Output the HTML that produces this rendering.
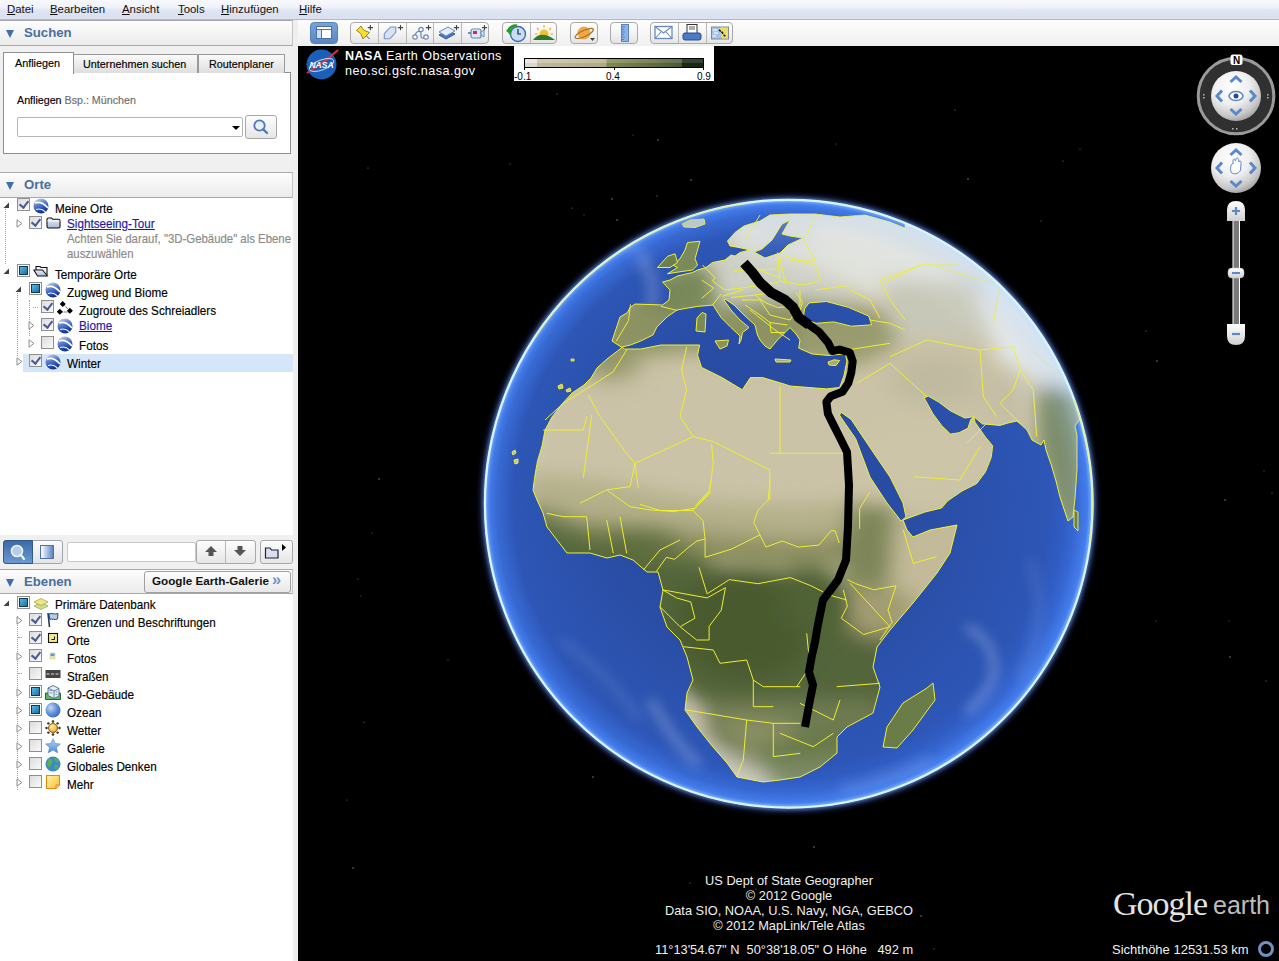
<!DOCTYPE html>
<html><head><meta charset="utf-8">
<style>
*{margin:0;padding:0;box-sizing:border-box}
html,body{width:1279px;height:961px;overflow:hidden;background:#f0f0f0;font-family:"Liberation Sans",sans-serif;color:#000}
.a{position:absolute;white-space:nowrap}
.t{position:absolute;white-space:nowrap;font-size:11.7px;line-height:14px;transform:scaleY(1.08);transform-origin:0 0;-webkit-text-stroke:.15px currentColor}
#menu{position:absolute;left:0;top:0;width:1279px;height:20px;background:linear-gradient(#f8f9fd 0,#eef1f9 42%,#dfe5f3 52%,#d9e0f0 90%,#dfe5f3 100%);border-bottom:1px solid #b0b6c2}
#menu span{position:absolute;top:3px;font-size:11.4px;line-height:13px;color:#111}
.hdr{position:absolute;left:0;width:293px;background:linear-gradient(#fdfdfd,#ebebeb);border-top:1px solid #a9a9a9;border-bottom:1px solid #a9a9a9;border-right:1px solid #c4c4c4}
.hdr .tri{position:absolute;left:6px;width:0;height:0;border-left:4.5px solid transparent;border-right:4.5px solid transparent;border-top:8px solid #3f6db0}
.hdr .ht{position:absolute;left:24px;font-weight:bold;font-size:13.2px;color:#4a6e9f}
.cb{position:absolute;width:13px;height:13px;border:1px solid #8f8f8f;background:linear-gradient(135deg,#dcdcdc,#fafafa)}
.cb.on::after{content:"";position:absolute;left:3px;top:0px;width:4px;height:7px;border-right:2px solid #4a5a92;border-bottom:2px solid #4a5a92;transform:rotate(38deg)}
.cb.part{background:#fff}.cb.part::after{content:"";position:absolute;left:1px;top:1px;width:7px;height:7px;background:linear-gradient(135deg,#5ab8e4,#1f6f9f);border:1px solid #0e3a5e}
.exp{position:absolute;width:0;height:0;border-top:4px solid transparent;border-bottom:4px solid transparent;border-left:5px solid #fff}
.expo{position:absolute;width:6px;height:6px}
.lnk{color:#1a1aa6;text-decoration:underline}
.gry{color:#808080}
.dots{position:absolute;width:1px;border-left:1px dotted #a0a0a0}
.btn{position:absolute;border:1px solid #a8a8a8;border-radius:3px;background:linear-gradient(#fdfdfd,#e6e6e6)}
#map{position:absolute;left:298px;top:46px;width:981px;height:915px;background:#000;overflow:hidden}
#tb{position:absolute;left:298px;top:20px;width:981px;height:26px;background:linear-gradient(#fdfdfd,#f0f0f0)}
</style></head><body>
<svg width="0" height="0" style="position:absolute"><defs>
<linearGradient id="gg" x1=".2" y1="0" x2=".6" y2="1"><stop offset="0" stop-color="#c8d4ea"/><stop offset=".35" stop-color="#6a88d0"/><stop offset=".65" stop-color="#2f58c0"/><stop offset="1" stop-color="#0f2a7a"/></linearGradient>
<linearGradient id="fg" x1="0" y1="0" x2="0" y2="1"><stop offset="0" stop-color="#eef2fa"/><stop offset="1" stop-color="#a9b8d6"/></linearGradient>
<radialGradient id="og" cx="35%" cy="35%" r="70%"><stop offset="0" stop-color="#c8d8f5"/><stop offset=".6" stop-color="#5f8fd8"/><stop offset="1" stop-color="#3a6ac0"/></radialGradient>
<radialGradient id="sg" cx="40%" cy="35%" r="70%"><stop offset="0" stop-color="#fff2a0"/><stop offset="1" stop-color="#f0a020"/></radialGradient>
<linearGradient id="stg" x1="0" y1="0" x2="0" y2="1"><stop offset="0" stop-color="#b8d8f8"/><stop offset="1" stop-color="#4a8ad8"/></linearGradient>
<linearGradient id="ng" x1="0" y1="0" x2="1" y2="1"><stop offset="0" stop-color="#fff0a0"/><stop offset="1" stop-color="#f8c040"/></linearGradient>
</defs></svg>
<div id="menu">
<span style="left:7px"><u>D</u>atei</span>
<span style="left:50px"><u>B</u>earbeiten</span>
<span style="left:122px"><u>A</u>nsicht</span>
<span style="left:178px"><u>T</u>ools</span>
<span style="left:221px"><u>H</u>inzufügen</span>
<span style="left:299px"><u>H</u>ilfe</span>
</div>

<!-- LEFT PANEL -->
<div class="hdr" style="top:20px;height:26px"><div class="tri" style="top:9px"></div><div class="ht a" style="top:4px">Suchen</div></div>

<!-- tabs -->
<div class="a" style="left:3px;top:72px;width:288px;height:82px;background:#fff;border:1px solid #8e8f8f"></div>
<div class="a" style="left:73px;top:54px;width:125px;height:19px;background:linear-gradient(#fafafa,#dedede);border:1px solid #9a9a9a;border-bottom:none"></div>
<div class="a" style="left:198px;top:54px;width:87px;height:19px;background:linear-gradient(#fafafa,#dedede);border:1px solid #9a9a9a;border-bottom:none"></div>
<div class="a" style="left:3px;top:52px;width:71px;height:22px;background:#fff;border:1px solid #8e8f8f;border-bottom:none"></div>
<div class="t" style="left:15px;top:55px;font-size:10.8px">Anfliegen</div>
<div class="t" style="left:83px;top:56px;font-size:10.8px">Unternehmen suchen</div>
<div class="t" style="left:209px;top:56px;font-size:10.8px">Routenplaner</div>
<div class="t" style="left:17px;top:92px;font-size:10.7px">Anfliegen <span style="color:#6e6e6e">Bsp.: München</span></div>
<div class="a" style="left:17px;top:117px;width:226px;height:20px;background:#fff;border:1px solid #b5b5b5;border-radius:2px"></div>
<div class="a" style="left:232px;top:126px;width:0;height:0;border-left:4px solid transparent;border-right:4px solid transparent;border-top:4px solid #000"></div>
<div class="btn" style="left:245px;top:115px;width:32px;height:24px"></div>
<svg class="a" style="left:252px;top:118px" width="18" height="18" viewBox="0 0 18 18"><circle cx="7.5" cy="7.5" r="5.2" fill="#e8f0fa" stroke="#4f78b8" stroke-width="1.8"/><line x1="11.3" y1="11.3" x2="15" y2="15" stroke="#4f78b8" stroke-width="2.4" stroke-linecap="round"/></svg>

<div class="hdr" style="top:172px;height:26px"><div class="tri" style="top:9px"></div><div class="ht a" style="top:4px">Orte</div></div>
<div class="a" style="left:0;top:198px;width:293px;height:337px;background:#fff"></div>
<div id="orte"><div class="dots" style="left:5px;top:209px;height:55px"></div>
<svg class="a" style="left:3px;top:202px" width="7" height="7" viewBox="0 0 7 7"><path d="M6 0.5 V6 H0.5 Z" fill="#404040"/></svg>
<div class="cb on" style="left:17px;top:198px"></div>
<svg class="a" style="left:33px;top:198px" width="16" height="16" viewBox="0 0 16 16"><circle cx="8" cy="8" r="7.5" fill="url(#gg)"/><path d="M2 5 C6 3.5 11 5.5 15 10" stroke="#fff" stroke-width="1.8" fill="none"/><path d="M3 11.5 C6 10.5 10 11.5 12.5 14" stroke="#fff" stroke-width="1.1" fill="none" opacity=".95"/></svg>
<div class="t" style="left:55px;top:201px;">Meine Orte</div>
<svg class="a" style="left:16px;top:219px" width="7" height="9" viewBox="0 0 7 9"><path d="M1 0.8 L5.8 4.5 L1 8.2 Z" fill="#fff" stroke="#8c8c8c" stroke-width="1"/></svg>
<div class="cb on" style="left:29px;top:216px"></div>
<svg class="a" style="left:46px;top:217px" width="15" height="12" viewBox="0 0 15 12"><path d="M1 2.5 Q1 1 2.5 1 H5.5 L6.8 2.3 H12.5 Q14 2.3 14 3.8 V9.8 Q14 11 12.5 11 H2.5 Q1 11 1 9.8 Z" fill="url(#fg)" stroke="#111" stroke-width="1.1"/><path d="M1.3 4 H13.7" stroke="#fff" stroke-width=".8"/></svg>
<div class="t" style="left:67px;top:216px;color:#1a1aa6;text-decoration:underline">Sightseeing-Tour</div>
<div class="t" style="left:67px;top:231px;color:#8a8a8a;font-size:11.4px">Achten Sie darauf, "3D-Gebäude" als Ebene</div>
<div class="t" style="left:67px;top:246px;color:#8a8a8a;font-size:11.4px">auszuwählen</div>
<svg class="a" style="left:3px;top:268px" width="7" height="7" viewBox="0 0 7 7"><path d="M6 0.5 V6 H0.5 Z" fill="#404040"/></svg>
<div class="cb part" style="left:17px;top:264px"></div>
<svg class="a" style="left:33px;top:265px" width="16" height="12" viewBox="0 0 16 12"><path d="M3 5 V1.5 H7 L8 2.5 H14 V10" fill="#eef2fa" stroke="#111" stroke-width="1.1"/><path d="M0.8 5 H9.5 L14.5 11 H4.5 Z" fill="url(#fg)" stroke="#111" stroke-width="1.1" stroke-linejoin="round"/></svg>
<div class="t" style="left:55px;top:267px;">Temporäre Orte</div>
<div class="dots" style="left:17px;top:293px;height:63px"></div>
<div class="dots" style="left:29px;top:300px;height:36px"></div>
<div class="a" style="left:33px;top:307px;width:5px;border-top:1px dotted #a0a0a0"></div>
<svg class="a" style="left:15px;top:286px" width="7" height="7" viewBox="0 0 7 7"><path d="M6 0.5 V6 H0.5 Z" fill="#404040"/></svg>
<div class="cb part" style="left:29px;top:282px"></div>
<svg class="a" style="left:45px;top:282px" width="16" height="16" viewBox="0 0 16 16"><circle cx="8" cy="8" r="7.5" fill="url(#gg)"/><path d="M2 5 C6 3.5 11 5.5 15 10" stroke="#fff" stroke-width="1.8" fill="none"/><path d="M3 11.5 C6 10.5 10 11.5 12.5 14" stroke="#fff" stroke-width="1.1" fill="none" opacity=".95"/></svg>
<div class="t" style="left:67px;top:285px;">Zugweg und Biome</div>
<div class="cb on" style="left:41px;top:300px"></div>
<svg class="a" style="left:57px;top:300px" width="17" height="15" viewBox="0 0 17 15"><path d="M6 4 L13 11 M3 12 H13" stroke="#222" stroke-width=".9" stroke-dasharray="1.2 .9"/><path d="M5.7 1 L8.7 4 L5.7 7 L2.7 4 Z M2.8 8.8 L5.8 11.8 L2.8 14.8 L-0.2 11.8 Z M12.9 7.8 L15.9 10.8 L12.9 13.8 L9.9 10.8 Z" fill="#000"/></svg>
<div class="t" style="left:79px;top:303px;">Zugroute des Schreiadlers</div>
<svg class="a" style="left:28px;top:321px" width="7" height="9" viewBox="0 0 7 9"><path d="M1 0.8 L5.8 4.5 L1 8.2 Z" fill="#fff" stroke="#8c8c8c" stroke-width="1"/></svg>
<div class="cb on" style="left:41px;top:318px"></div>
<svg class="a" style="left:57px;top:318px" width="16" height="16" viewBox="0 0 16 16"><circle cx="8" cy="8" r="7.5" fill="url(#gg)"/><path d="M2 5 C6 3.5 11 5.5 15 10" stroke="#fff" stroke-width="1.8" fill="none"/><path d="M3 11.5 C6 10.5 10 11.5 12.5 14" stroke="#fff" stroke-width="1.1" fill="none" opacity=".95"/></svg>
<div class="t" style="left:79px;top:318px;color:#1a1aa6;text-decoration:underline">Biome</div>
<svg class="a" style="left:28px;top:339px" width="7" height="9" viewBox="0 0 7 9"><path d="M1 0.8 L5.8 4.5 L1 8.2 Z" fill="#fff" stroke="#8c8c8c" stroke-width="1"/></svg>
<div class="cb" style="left:41px;top:336px"></div>
<svg class="a" style="left:57px;top:336px" width="16" height="16" viewBox="0 0 16 16"><circle cx="8" cy="8" r="7.5" fill="url(#gg)"/><path d="M2 5 C6 3.5 11 5.5 15 10" stroke="#fff" stroke-width="1.8" fill="none"/><path d="M3 11.5 C6 10.5 10 11.5 12.5 14" stroke="#fff" stroke-width="1.1" fill="none" opacity=".95"/></svg>
<div class="t" style="left:79px;top:338px;">Fotos</div>
<div class="a" style="left:23px;top:354px;width:270px;height:18px;background:#d5e6f8"></div>
<svg class="a" style="left:16px;top:357px" width="7" height="9" viewBox="0 0 7 9"><path d="M1 0.8 L5.8 4.5 L1 8.2 Z" fill="#fff" stroke="#8c8c8c" stroke-width="1"/></svg>
<div class="cb on" style="left:29px;top:354px"></div>
<svg class="a" style="left:45px;top:354px" width="16" height="16" viewBox="0 0 16 16"><circle cx="8" cy="8" r="7.5" fill="url(#gg)"/><path d="M2 5 C6 3.5 11 5.5 15 10" stroke="#fff" stroke-width="1.8" fill="none"/><path d="M3 11.5 C6 10.5 10 11.5 12.5 14" stroke="#fff" stroke-width="1.1" fill="none" opacity=".95"/></svg>
<div class="t" style="left:67px;top:356px;">Winter</div></div><!--/orte-->

<!-- bottom toolbar -->
<div class="a" style="left:3px;top:540px;width:60px;height:24px;border:1px solid #9fa6ad;border-radius:3px;background:linear-gradient(#fbfbfb,#e4e4e4)"></div>
<div class="a" style="left:3px;top:540px;width:30px;height:24px;border-radius:3px 0 0 3px;background:linear-gradient(#3d6aa8,#6a98d2);border:1px solid #2f5a90"></div>
<svg class="a" style="left:8px;top:543px" width="20" height="18" viewBox="0 0 20 18"><circle cx="9" cy="8" r="5.5" fill="#b7cdea" stroke="#eef4fb" stroke-width="1.6"/><line x1="13" y1="12" x2="16" y2="16" stroke="#eef4fb" stroke-width="2.2" stroke-linecap="round"/></svg>
<div class="a" style="left:40px;top:545px;width:14px;height:14px;border:1px solid #4f70a8;background:linear-gradient(90deg,#fff,#5a84c4)"></div>
<div class="a" style="left:67px;top:542px;width:129px;height:20px;background:#fff;border:1px solid #c8c8c8;border-radius:2px"></div>
<div class="btn" style="left:196px;top:540px;width:60px;height:24px"></div>
<div class="a" style="left:225px;top:541px;width:1px;height:22px;background:#b8b8b8"></div>
<svg class="a" style="left:203px;top:544px" width="16" height="14" viewBox="0 0 16 14"><path d="M8 2 L14 8 H10.5 V12 H5.5 V8 H2 Z" fill="#555"/></svg>
<svg class="a" style="left:232px;top:544px" width="16" height="14" viewBox="0 0 16 14"><path d="M8 12 L14 6 H10.5 V2 H5.5 V6 H2 Z" fill="#555"/></svg>
<div class="btn" style="left:260px;top:540px;width:33px;height:24px"></div>
<svg class="a" style="left:264px;top:543px" width="28" height="18" viewBox="0 0 28 18"><path d="M1.5 5 H6 L7.5 7 H14 V15 H1.5 Z" fill="#d7dff0" stroke="#222" stroke-width="1.2"/><path d="M18 1 L22 4.5 L18 8 Z" fill="#000"/></svg>

<div class="hdr" style="top:569px;height:25px"><div class="tri" style="top:9px"></div><div class="ht a" style="top:4px">Ebenen</div></div>
<div class="a" style="left:144px;top:571px;width:147px;height:22px;border:1px solid #a0a0a0;border-radius:3px;background:linear-gradient(#fdfdfd,#e8e8e8)"></div>
<div class="a" style="left:152px;top:574px;font-weight:bold;font-size:11.7px;line-height:14px;color:#111">Google Earth-Galerie</div><div class="a" style="left:272px;top:571px;font-weight:bold;font-size:16px;line-height:18px;color:#6a92cc;letter-spacing:-1.5px">››</div>
<div class="a" style="left:0;top:594px;width:293px;height:367px;background:#fff"></div>
<div id="ebenen"><div class="dots" style="left:17px;top:616px;height:174px"></div>
<svg class="a" style="left:3px;top:600px" width="7" height="7" viewBox="0 0 7 7"><path d="M6 0.5 V6 H0.5 Z" fill="#404040"/></svg>
<div class="cb part" style="left:17px;top:596px"></div>
<svg class="a" style="left:33px;top:596px" width="16" height="16" viewBox="0 0 16 16"><path d="M1 10 L8 6.5 L15 10 L8 13.5 Z" fill="#c8e08a" stroke="#9ab050" stroke-width=".8"/><path d="M1 6 L8 2.5 L15 6 L8 9.5 Z" fill="#f2e58a" stroke="#b8a040" stroke-width=".8"/></svg>
<div class="t" style="left:55px;top:597px;">Primäre Datenbank</div>
<svg class="a" style="left:16px;top:616px" width="7" height="9" viewBox="0 0 7 9"><path d="M1 0.8 L5.8 4.5 L1 8.2 Z" fill="#fff" stroke="#8c8c8c" stroke-width="1"/></svg>
<div class="cb on" style="left:29px;top:613px"></div>
<svg class="a" style="left:45px;top:612px" width="16" height="16" viewBox="0 0 16 16"><path d="M3 1 L4.5 15" stroke="#223a66" stroke-width="1.6"/><path d="M4 2 C7 0.5 9 3 13 1.5 L12.5 7 C9 8.5 7 6 4.8 7.5 Z" fill="#b9cdea" stroke="#2a4a7a" stroke-width="1"/></svg>
<div class="t" style="left:67px;top:615px;">Grenzen und Beschriftungen</div>
<div class="a" style="left:18px;top:637px;width:4px;border-top:1px dotted #a0a0a0"></div>
<div class="cb on" style="left:29px;top:631px"></div>
<svg class="a" style="left:45px;top:630px" width="16" height="16" viewBox="0 0 16 16"><rect x="3.5" y="3.5" width="9" height="9" fill="#f5ea8a" stroke="#111" stroke-width="1.1"/><path d="M6.5 9.5 H9.5 V6.5" stroke="#111" stroke-width="1" fill="none"/></svg>
<div class="t" style="left:67px;top:633px;">Orte</div>
<svg class="a" style="left:16px;top:652px" width="7" height="9" viewBox="0 0 7 9"><path d="M1 0.8 L5.8 4.5 L1 8.2 Z" fill="#fff" stroke="#8c8c8c" stroke-width="1"/></svg>
<div class="cb on" style="left:29px;top:649px"></div>
<svg class="a" style="left:45px;top:648px" width="16" height="16" viewBox="0 0 16 16"><rect x="5" y="5" width="5" height="6" fill="#e8e4a0" stroke="#ccc" stroke-width=".6"/><rect x="5.5" y="5.5" width="4" height="2.5" fill="#5aa0d8"/></svg>
<div class="t" style="left:67px;top:651px;">Fotos</div>
<div class="a" style="left:18px;top:673px;width:4px;border-top:1px dotted #a0a0a0"></div>
<div class="cb" style="left:29px;top:667px"></div>
<svg class="a" style="left:45px;top:666px" width="16" height="16" viewBox="0 0 16 16"><rect x="0.5" y="4" width="15" height="8" fill="#444"/><path d="M1.5 8 H14.5" stroke="#ddd" stroke-width="1.2" stroke-dasharray="3 1.5"/></svg>
<div class="t" style="left:67px;top:669px;">Straßen</div>
<svg class="a" style="left:16px;top:688px" width="7" height="9" viewBox="0 0 7 9"><path d="M1 0.8 L5.8 4.5 L1 8.2 Z" fill="#fff" stroke="#8c8c8c" stroke-width="1"/></svg>
<div class="cb part" style="left:29px;top:685px"></div>
<svg class="a" style="left:45px;top:684px" width="16" height="16" viewBox="0 0 16 16"><path d="M0.5 9 H15.5 V15.5 H0.5 Z" fill="#5cb85c" stroke="#1d6a22" stroke-width="1"/><path d="M3 4 L8 1.5 L14 4.5 V12 L9 14.5 L3 11.5 Z" fill="#e4eef8" stroke="#4a6a8a" stroke-width=".9"/><path d="M9 7 V14.5 M3 4 L9 7 L14 4.5" stroke="#4a6a8a" stroke-width=".8" fill="none"/><path d="M4.5 6.5 H7.5 M4.5 9 H7.5 M10.5 8 H12.5 M10.5 10.5 H12.5" stroke="#7a9ac0" stroke-width="1.1"/></svg>
<div class="t" style="left:67px;top:687px;">3D-Gebäude</div>
<svg class="a" style="left:16px;top:706px" width="7" height="9" viewBox="0 0 7 9"><path d="M1 0.8 L5.8 4.5 L1 8.2 Z" fill="#fff" stroke="#8c8c8c" stroke-width="1"/></svg>
<div class="cb part" style="left:29px;top:703px"></div>
<svg class="a" style="left:45px;top:702px" width="16" height="16" viewBox="0 0 16 16"><circle cx="8" cy="8" r="7.5" fill="url(#og)"/></svg>
<div class="t" style="left:67px;top:705px;">Ozean</div>
<svg class="a" style="left:16px;top:724px" width="7" height="9" viewBox="0 0 7 9"><path d="M1 0.8 L5.8 4.5 L1 8.2 Z" fill="#fff" stroke="#8c8c8c" stroke-width="1"/></svg>
<div class="cb" style="left:29px;top:721px"></div>
<svg class="a" style="left:45px;top:720px" width="16" height="16" viewBox="0 0 16 16"><circle cx="8" cy="8" r="4.5" fill="url(#sg)" stroke="#5a3a00" stroke-width=".8"/><g fill="#3a2a10"><circle cx="8" cy="1.5" r="1.2"/><circle cx="8" cy="14.5" r="1.2"/><circle cx="1.5" cy="8" r="1.2"/><circle cx="14.5" cy="8" r="1.2"/><circle cx="3.4" cy="3.4" r="1.2"/><circle cx="12.6" cy="12.6" r="1.2"/><circle cx="3.4" cy="12.6" r="1.2"/><circle cx="12.6" cy="3.4" r="1.2"/></g></svg>
<div class="t" style="left:67px;top:723px;">Wetter</div>
<svg class="a" style="left:16px;top:742px" width="7" height="9" viewBox="0 0 7 9"><path d="M1 0.8 L5.8 4.5 L1 8.2 Z" fill="#fff" stroke="#8c8c8c" stroke-width="1"/></svg>
<div class="cb" style="left:29px;top:739px"></div>
<svg class="a" style="left:45px;top:738px" width="16" height="16" viewBox="0 0 16 16"><path d="M8 0.8 L10.2 5.6 L15.3 6 L11.4 9.4 L12.7 14.8 L8 12 L3.3 14.8 L4.6 9.4 L0.7 6 L5.8 5.6 Z" fill="url(#stg)" stroke="#5a8ac8" stroke-width=".7"/></svg>
<div class="t" style="left:67px;top:741px;">Galerie</div>
<svg class="a" style="left:16px;top:760px" width="7" height="9" viewBox="0 0 7 9"><path d="M1 0.8 L5.8 4.5 L1 8.2 Z" fill="#fff" stroke="#8c8c8c" stroke-width="1"/></svg>
<div class="cb" style="left:29px;top:757px"></div>
<svg class="a" style="left:45px;top:756px" width="16" height="16" viewBox="0 0 16 16"><circle cx="8" cy="8" r="7.5" fill="#3a8ad0"/><path d="M3 3.5 C5 2 7 3 7.5 5 C8 7 6 8 5.5 10 C5 12 3 11 2 9 Z M9 2 C11 1.5 13.5 3.5 14 6 C13 7 11 6 10 5 Z M9.5 9 C11 8.5 13.5 9 13 11.5 C12 13.5 10 14 9.5 12 Z" fill="#5fae4a"/></svg>
<div class="t" style="left:67px;top:759px;">Globales Denken</div>
<svg class="a" style="left:16px;top:778px" width="7" height="9" viewBox="0 0 7 9"><path d="M1 0.8 L5.8 4.5 L1 8.2 Z" fill="#fff" stroke="#8c8c8c" stroke-width="1"/></svg>
<div class="cb" style="left:29px;top:775px"></div>
<svg class="a" style="left:45px;top:774px" width="16" height="16" viewBox="0 0 16 16"><path d="M1.5 1.5 H14.5 V11 L11 14.5 H1.5 Z" fill="url(#ng)" stroke="#e08a10" stroke-width="1.1"/><path d="M11 14.5 V11 H14.5" fill="#f8d070" stroke="#e08a10" stroke-width="1"/></svg>
<div class="t" style="left:67px;top:777px;">Mehr</div></div><!--/ebenen-->

<!-- splitter -->
<div class="a" style="left:293px;top:20px;width:5px;height:941px;background:#efefef"></div>

<!-- TOOLBAR -->
<div id="tb"></div>
<div id="tbicons"><div class="a" style="left:310px;top:22px;width:28px;height:22px;border-radius:4px;background:linear-gradient(#7aa3d8,#5a86c4);border:1px solid #5a80b8"></div>
<div class="a" style="left:316px;top:26px;width:16px;height:13px;background:#fff;border:1px solid #4a70a8"></div>
<div class="a" style="left:317px;top:30px;width:4px;height:8px;background:#cfe0f5"></div>
<div class="a" style="left:321px;top:29px;width:1px;height:9px;background:#4a70a8"></div>
<div class="a" style="left:317px;top:29px;width:14px;height:1px;background:#4a70a8"></div>
<div class="a" style="left:350px;top:22px;width:139px;height:22px;border:1px solid #a9a9a9;border-radius:4px;background:linear-gradient(#fefefe 0,#f4f4f4 50%,#e4e4e4 100%)"></div><div class="a" style="left:378px;top:23px;width:1px;height:20px;background:#b8b8b8"></div><div class="a" style="left:406px;top:23px;width:1px;height:20px;background:#b8b8b8"></div><div class="a" style="left:433px;top:23px;width:1px;height:20px;background:#b8b8b8"></div><div class="a" style="left:461px;top:23px;width:1px;height:20px;background:#b8b8b8"></div>
<div class="a" style="left:502px;top:22px;width:55px;height:22px;border:1px solid #a9a9a9;border-radius:4px;background:linear-gradient(#fefefe 0,#f4f4f4 50%,#e4e4e4 100%)"></div><div class="a" style="left:530px;top:23px;width:1px;height:20px;background:#b8b8b8"></div>
<div class="a" style="left:570px;top:22px;width:28px;height:22px;border:1px solid #a9a9a9;border-radius:4px;background:linear-gradient(#fefefe 0,#f4f4f4 50%,#e4e4e4 100%)"></div>
<div class="a" style="left:610px;top:22px;width:28px;height:22px;border:1px solid #a9a9a9;border-radius:4px;background:linear-gradient(#fefefe 0,#f4f4f4 50%,#e4e4e4 100%)"></div>
<div class="a" style="left:650px;top:22px;width:83px;height:22px;border:1px solid #a9a9a9;border-radius:4px;background:linear-gradient(#fefefe 0,#f4f4f4 50%,#e4e4e4 100%)"></div><div class="a" style="left:678px;top:23px;width:1px;height:20px;background:#b8b8b8"></div><div class="a" style="left:706px;top:23px;width:1px;height:20px;background:#b8b8b8"></div>
<svg class="a" style="left:354px;top:24px" width="24" height="18" viewBox="0 0 24 18"><path d="M12.5 12 L15.5 15" stroke="#555" stroke-width="1"/><path d="M2.5 6.5 L7 2 L8.5 4.8 L10.5 6.5 L15.5 8.5 L9 15 L6.8 9.8 L5 8.2 Z" fill="#f8e02a" stroke="#8a7a10" stroke-width=".9" stroke-linejoin="round"/><path d="M13.799999999999999 3.6 H19.0 M16.4 1.0 V6.2" stroke="#444" stroke-width="1.1"/></svg>
<svg class="a" style="left:382px;top:24px" width="24" height="18" viewBox="0 0 24 18"><path d="M2.3 9.6 L8.4 3 H13.8 V8.4 L7.9 14.8 H2.3 Z" fill="#d4e2f4" stroke="#7a94b8" stroke-width="1.1"/><path d="M15.9 3.6 H21.1 M18.5 1.0 V6.2" stroke="#444" stroke-width="1.1"/></svg>
<svg class="a" style="left:410px;top:24px" width="24" height="18" viewBox="0 0 24 18"><path d="M5 12 C6 6 12 6 11 11 C10 15 16 15 17 12" stroke="#6a8ab8" stroke-width="1.2" fill="none"/><circle cx="11" cy="5.5" r="2.2" fill="#fff" stroke="#6a8ab8" stroke-width="1.2"/><circle cx="5" cy="13" r="2.2" fill="#fff" stroke="#6a8ab8" stroke-width="1.2"/><circle cx="16" cy="13" r="2.2" fill="#fff" stroke="#6a8ab8" stroke-width="1.2"/><path d="M15.9 3.6 H21.1 M18.5 1.0 V6.2" stroke="#444" stroke-width="1.1"/></svg>
<svg class="a" style="left:437px;top:24px" width="24" height="18" viewBox="0 0 24 18"><path d="M2 11 L11 6 L18 10 L9 15 Z" fill="#4a78c8" stroke="#3a5aa0" stroke-width="1"/><path d="M2 8 L11 3 L18 7 L9 12 Z" fill="#e8eef8" stroke="#6a8ab8" stroke-width="1"/><path d="M16.9 3.6 H22.1 M19.5 1.0 V6.2" stroke="#444" stroke-width="1.1"/></svg>
<svg class="a" style="left:465px;top:24px" width="24" height="18" viewBox="0 0 24 18"><path d="M3 9 H6" stroke="#6a8ab8" stroke-width="2"/><rect x="6" y="5" width="10" height="9" rx="2" fill="#dde6f4" stroke="#6a8ab8" stroke-width="1.2"/><rect x="8" y="7" width="4" height="3" fill="#c03060"/><path d="M16 8 L19 6 V13 L16 11 Z" fill="#dde6f4" stroke="#6a8ab8" stroke-width="1"/><path d="M16.9 3.6 H22.1 M19.5 1.0 V6.2" stroke="#444" stroke-width="1.1"/></svg>
<svg class="a" style="left:505px;top:23px" width="24" height="20" viewBox="0 0 24 20"><circle cx="13" cy="11" r="7.5" fill="#c8dcf5" stroke="#3a6ab8" stroke-width="1.4"/><path d="M13 6 V11 H16" stroke="#223" stroke-width="1.2" fill="none"/><path d="M3 9 C4 4 9 2 12 3" stroke="#2a9a30" stroke-width="3" fill="none"/><path d="M1 7 L5 12 L7 6 Z" fill="#2a9a30"/></svg>
<svg class="a" style="left:532px;top:23px" width="24" height="20" viewBox="0 0 24 20"><circle cx="12" cy="11" r="4.5" fill="#f5c030"/><g stroke="#f0a020" stroke-width="1.2"><path d="M12 2 V4.5 M5 5 L6.8 6.8 M19 5 L17.2 6.8 M3 11 H5.5 M21 11 H18.5"/></g><path d="M1 17 C6 10 14 10 23 17 Z" fill="#2a7a2a"/></svg>
<svg class="a" style="left:573px;top:23px" width="24" height="20" viewBox="0 0 24 20"><circle cx="11" cy="10" r="6.5" fill="#f0a848"/><ellipse cx="11" cy="10.5" rx="10" ry="3" fill="none" stroke="#b07020" stroke-width="1.2" transform="rotate(-25 11 10)"/><path d="M17 15 H22 L19.5 18 Z" fill="#444"/></svg>
<svg class="a" style="left:618px;top:23px" width="14" height="20" viewBox="0 0 14 20"><rect x="3.5" y="1.5" width="7" height="17" fill="#8cb4ea" stroke="#5a82c0" stroke-width="1"/><path d="M4 4 H7 M4 6.5 H6 M4 9 H7 M4 11.5 H6 M4 14 H7 M4 16.5 H6" stroke="#4a6aa8" stroke-width=".7"/></svg>
<svg class="a" style="left:653px;top:24px" width="22" height="18" viewBox="0 0 22 18"><rect x="2" y="2.5" width="17" height="12" fill="#fff" stroke="#6a8ab8" stroke-width="1.3"/><path d="M2 2.5 L10.5 9 L19 2.5 M2 14.5 L8 8 M19 14.5 L13 8" stroke="#6a8ab8" stroke-width="1.1" fill="none"/></svg>
<svg class="a" style="left:681px;top:23px" width="22" height="20" viewBox="0 0 22 20"><rect x="6" y="1.5" width="10" height="9" fill="#fff" stroke="#333" stroke-width="1"/><path d="M8 4 H14 M8 6 H14" stroke="#333" stroke-width=".8"/><rect x="2" y="10" width="18" height="7" rx="2" fill="#4a7ac8" stroke="#2a4a88" stroke-width="1"/></svg>
<svg class="a" style="left:709px;top:24px" width="22" height="18" viewBox="0 0 22 18"><rect x="2.5" y="3" width="17" height="12" fill="#a8c4e4" stroke="#7a8a9a" stroke-width="1"/><path d="M11 3.5 H19 V14.5 H13 Z" fill="#f2dc60"/><path d="M4 6 H8 M5 9 H9 M3.5 12 H7" stroke="#fff" stroke-width="1"/><path d="M10 6 L13 8 L15 11 L17 13" stroke="#111" stroke-width="1.6" stroke-dasharray="2 1.5"/></svg></div><!--/tbicons-->

<!-- MAP -->
<div id="map"></div>
<div id="mapc"><svg class="a" style="left:298px;top:46px" width="981" height="915" viewBox="298 46 981 915">
<defs>
<radialGradient id="ocn" gradientUnits="userSpaceOnUse" cx="788.75" cy="503.75" r="304.5" fx="730" fy="480">
<stop offset="0" stop-color="#25479a"/><stop offset=".55" stop-color="#2a4ea6"/><stop offset=".88" stop-color="#2d56b6"/><stop offset=".95" stop-color="#3262ce"/><stop offset=".985" stop-color="#3e76ea"/><stop offset=".995" stop-color="#5e98f8"/><stop offset="1" stop-color="#a8d8ff"/></radialGradient>
<radialGradient id="glow" gradientUnits="userSpaceOnUse" cx="788.75" cy="503.75" r="314">
<stop offset=".965" stop-color="#c8ecff" stop-opacity="1"/><stop offset=".972" stop-color="#5a80c8" stop-opacity=".75"/><stop offset=".985" stop-color="#1a2a60" stop-opacity=".4"/><stop offset="1" stop-color="#000010" stop-opacity="0"/></radialGradient>
<radialGradient id="haze" gradientUnits="userSpaceOnUse" cx="788.75" cy="503.75" r="304.5">
<stop offset=".9" stop-color="#6aa0ff" stop-opacity="0"/><stop offset=".98" stop-color="#6aa8ff" stop-opacity=".15"/><stop offset="1" stop-color="#b0e0ff" stop-opacity=".5"/></radialGradient>
<radialGradient id="lhaze" gradientUnits="userSpaceOnUse" cx="788.75" cy="503.75" r="304.5"><stop offset=".8" stop-color="#e8f0ff" stop-opacity="0"/><stop offset=".95" stop-color="#e0ecff" stop-opacity=".25"/><stop offset="1" stop-color="#d8ecff" stop-opacity=".5"/></radialGradient>
<clipPath id="gclip"><circle cx="788.75" cy="503.75" r="304.5"/></clipPath>
<clipPath id="lclip"><polygon points="622.0,347.5 607.0,359.0 597.0,368.0 591.0,378.0 584.0,385.0 572.0,393.0 562.0,404.0 552.0,417.0 545.0,430.0 542.0,446.0 537.5,461.0 535.0,475.0 533.0,490.0 537.0,500.0 543.0,513.0 547.0,527.0 557.0,540.0 567.0,553.0 590.0,553.0 607.0,558.0 620.0,555.0 633.0,560.0 647.0,572.0 658.0,572.0 663.0,590.0 660.0,607.0 667.0,627.0 680.0,640.0 687.0,657.0 693.0,680.0 687.0,693.0 685.0,710.0 697.0,727.0 713.0,747.0 727.0,763.0 737.0,777.0 763.0,782.0 780.0,780.0 800.0,777.0 820.0,767.0 837.0,753.0 837.0,737.0 847.0,727.0 873.0,713.0 880.0,687.0 873.0,667.0 877.0,647.0 890.0,630.0 913.0,603.0 937.0,573.0 950.0,553.0 957.0,525.0 930.0,530.0 913.0,537.0 907.0,530.0 903.0,520.0 925.0,512.0 941.6,508.0 947.5,501.0 962.0,491.0 976.6,483.7 985.4,472.0 991.2,457.5 992.7,445.8 985.4,437.0 975.2,422.5 973.7,416.6 982.4,423.9 1000.0,425.4 1008.0,423.0 1017.0,421.0 1027.0,430.0 1032.0,440.0 1041.0,445.0 1044.0,440.0 1046.0,450.0 1051.0,464.0 1056.0,481.0 1060.0,497.0 1065.0,512.0 1068.0,521.0 1073.0,517.0 1075.0,498.0 1077.0,469.0 1077.0,435.0 1075.0,426.0 1080.0,419.0 1089.0,411.0 1110.0,380.0 1110.0,150.0 910.0,150.0 905.0,228.0 890.0,222.0 865.0,215.0 840.0,217.0 815.0,214.0 790.0,214.0 770.0,215.0 760.0,221.0 744.0,226.0 735.0,232.5 727.5,241.0 730.0,246.0 739.0,247.5 750.0,250.0 740.0,252.5 735.0,256.0 731.0,255.0 725.0,260.0 712.5,262.5 706.0,267.5 697.5,270.0 692.5,272.5 677.5,276.0 670.0,280.0 662.5,282.0 670.0,290.0 669.0,300.0 662.5,305.0 635.0,304.0 630.0,307.5 627.5,312.5 620.0,317.0 616.0,329.0 612.0,341.0 622.0,347.5"/></clipPath>
<filter id="blur6" x="-20%" y="-20%" width="140%" height="140%"><feGaussianBlur stdDeviation="6"/></filter>
<filter id="blur8" x="-30%" y="-30%" width="160%" height="160%"><feGaussianBlur stdDeviation="10"/></filter>
<filter id="blur12" x="-30%" y="-30%" width="160%" height="160%"><feGaussianBlur stdDeviation="12"/></filter>
</defs>
<g id="stars" fill="#7a7a7a"><circle cx="617" cy="220" r="0.8"/><circle cx="347" cy="800" r="0.5"/><circle cx="658" cy="140" r="0.8"/><circle cx="510" cy="164" r="0.6"/><circle cx="368" cy="168" r="0.6"/><circle cx="358" cy="579" r="0.5"/><circle cx="361" cy="596" r="0.5"/><circle cx="1256" cy="130" r="0.5"/><circle cx="584" cy="215" r="0.5"/><circle cx="968" cy="179" r="0.8"/><circle cx="836" cy="144" r="0.5"/><circle cx="756" cy="889" r="0.6"/><circle cx="593" cy="777" r="0.8"/><circle cx="1063" cy="161" r="0.6"/><circle cx="814" cy="847" r="0.8"/><circle cx="372" cy="533" r="0.5"/><circle cx="1041" cy="221" r="0.6"/><circle cx="713" cy="922" r="0.5"/><circle cx="1157" cy="361" r="0.8"/><circle cx="1080" cy="149" r="0.5"/><circle cx="1225" cy="500" r="0.8"/><circle cx="364" cy="722" r="0.6"/><circle cx="934" cy="949" r="0.6"/><circle cx="955" cy="110" r="0.6"/><circle cx="690" cy="883" r="0.6"/><circle cx="379" cy="479" r="0.8"/><circle cx="572" cy="208" r="0.6"/><circle cx="1146" cy="331" r="0.6"/><circle cx="1266" cy="681" r="0.6"/><circle cx="1238" cy="221" r="0.5"/><circle cx="448" cy="660" r="0.5"/><circle cx="557" cy="94" r="0.6"/><circle cx="612" cy="199" r="0.8"/><circle cx="1230" cy="657" r="0.8"/><circle cx="353" cy="868" r="0.8"/><circle cx="691" cy="180" r="0.8"/><circle cx="1264" cy="471" r="0.5"/><circle cx="633" cy="135" r="0.5"/><circle cx="1229" cy="621" r="0.5"/><circle cx="1156" cy="621" r="0.5"/><circle cx="921" cy="916" r="0.8"/><circle cx="657" cy="196" r="0.6"/><circle cx="1272" cy="493" r="0.6"/></g>
<circle cx="788.75" cy="503.75" r="314" fill="url(#glow)"/>
<g clip-path="url(#gclip)">
<circle cx="788.75" cy="503.75" r="304.5" fill="url(#ocn)"/>
<g id="clouds"><g filter="url(#blur6)" fill="none" stroke="#dfe8f8">
<path d="M640 260 C660 280 655 310 640 330" stroke-width="10" opacity=".25"/>
<path d="M600 235 C620 240 640 250 650 262" stroke-width="8" opacity=".18"/>
<path d="M650 700 C665 725 680 750 700 765" stroke-width="9" opacity=".28"/>
<path d="M560 640 C590 660 620 690 640 720" stroke-width="8" opacity=".12"/>
<path d="M966 627 C995 640 1000 670 987 690 C978 703 970 710 966 713" stroke-width="8" opacity=".3"/>
<path d="M840 790 C870 785 900 775 930 760" stroke-width="8" opacity=".2"/>
<path d="M1030 560 C1045 600 1040 640 1020 680" stroke-width="8" opacity=".12"/>
</g>
</g>
<g clip-path="url(#lclip)">
<polygon points="622.0,347.5 607.0,359.0 597.0,368.0 591.0,378.0 584.0,385.0 572.0,393.0 562.0,404.0 552.0,417.0 545.0,430.0 542.0,446.0 537.5,461.0 535.0,475.0 533.0,490.0 537.0,500.0 543.0,513.0 547.0,527.0 557.0,540.0 567.0,553.0 590.0,553.0 607.0,558.0 620.0,555.0 633.0,560.0 647.0,572.0 658.0,572.0 663.0,590.0 660.0,607.0 667.0,627.0 680.0,640.0 687.0,657.0 693.0,680.0 687.0,693.0 685.0,710.0 697.0,727.0 713.0,747.0 727.0,763.0 737.0,777.0 763.0,782.0 780.0,780.0 800.0,777.0 820.0,767.0 837.0,753.0 837.0,737.0 847.0,727.0 873.0,713.0 880.0,687.0 873.0,667.0 877.0,647.0 890.0,630.0 913.0,603.0 937.0,573.0 950.0,553.0 957.0,525.0 930.0,530.0 913.0,537.0 907.0,530.0 903.0,520.0 925.0,512.0 941.6,508.0 947.5,501.0 962.0,491.0 976.6,483.7 985.4,472.0 991.2,457.5 992.7,445.8 985.4,437.0 975.2,422.5 973.7,416.6 982.4,423.9 1000.0,425.4 1008.0,423.0 1017.0,421.0 1027.0,430.0 1032.0,440.0 1041.0,445.0 1044.0,440.0 1046.0,450.0 1051.0,464.0 1056.0,481.0 1060.0,497.0 1065.0,512.0 1068.0,521.0 1073.0,517.0 1075.0,498.0 1077.0,469.0 1077.0,435.0 1075.0,426.0 1080.0,419.0 1089.0,411.0 1110.0,380.0 1110.0,150.0 910.0,150.0 905.0,228.0 890.0,222.0 865.0,215.0 840.0,217.0 815.0,214.0 790.0,214.0 770.0,215.0 760.0,221.0 744.0,226.0 735.0,232.5 727.5,241.0 730.0,246.0 739.0,247.5 750.0,250.0 740.0,252.5 735.0,256.0 731.0,255.0 725.0,260.0 712.5,262.5 706.0,267.5 697.5,270.0 692.5,272.5 677.5,276.0 670.0,280.0 662.5,282.0 670.0,290.0 669.0,300.0 662.5,305.0 635.0,304.0 630.0,307.5 627.5,312.5 620.0,317.0 616.0,329.0 612.0,341.0 622.0,347.5" fill="#cbc3a7"/>
<g filter="url(#blur8)">
<polygon points="500,470 600,480 700,500 800,505 860,500 900,520 880,550 800,555 700,540 640,545 520,560" fill="#b4b08a"/>
<polygon points="500,512 600,522 700,532 800,540 860,535 880,560 800,572 700,562 640,572 520,590" fill="#8e9060"/>
<polygon points="520,508 555,512 590,530 640,545 700,552 720,575 700,600 520,600" fill="#627244"/>
<polygon points="500,530 600,548 660,560 700,565 740,578 820,578 860,590 900,630 960,680 960,790 800,800 760,760 740,720 690,700 640,640 630,600 500,600" fill="#53653a"/>
<polygon points="705,700 880,700 880,800 705,800" fill="#6f7c52"/>
<polygon points="670,695 690,700 700,730 722,752 760,772 790,780 780,800 700,800 665,740" fill="#cac6b2"/>
<polygon points="715,715 790,720 800,745 750,755" fill="#8a9064"/>
<polygon points="760,745 870,715 880,800 770,790" fill="#6a7a4c"/>
<polygon points="850,505 895,505 915,525 900,560 880,600 855,600 840,560" fill="#7e8658"/>
<polygon points="895,515 980,505 965,560 930,600 905,610 890,590" fill="#c2ba98"/>
<polygon points="845,585 905,590 925,610 885,640 850,630" fill="#a29c72"/>
<polygon points="600,290 700,265 720,300 800,300 880,310 900,340 830,365 760,360 700,350 600,360" fill="#8c9262"/>
<polygon points="705,250 830,235 870,260 860,295 780,298 715,285" fill="#cdd0c6"/>
<polygon points="700,288 745,285 760,295 740,300 715,302" fill="#d4d6d0"/>
<polygon points="650,270 705,265 715,300 690,310 650,310" fill="#72845a"/>
<polygon points="720,200 1000,200 1060,260 1000,300 880,300 820,270 740,245" fill="#e0e2dc"/>
<polygon points="800,320 880,320 900,345 860,365 800,365" fill="#9a9c70"/>
<polygon points="880,280 990,280 1000,340 900,340" fill="#c8c8b8"/>
<polygon points="980,260 1100,260 1100,400 1060,400 1000,360 980,300" fill="#e2e6e4"/>
<polygon points="1035,385 1100,385 1100,530 1060,530 1040,440" fill="#64764a"/>
</g>
<g filter="url(#blur12)">
<ellipse cx="745" cy="625" rx="70" ry="55" fill="#485a2e"/>
<ellipse cx="810" cy="600" rx="30" ry="35" fill="#4f6234"/>
<ellipse cx="640" cy="548" rx="40" ry="14" fill="#5a6a3a"/>
<ellipse cx="935" cy="380" rx="45" ry="28" fill="#c0baa0"/>
<ellipse cx="920" cy="455" rx="60" ry="45" fill="#cdc5a8"/>
<ellipse cx="1005" cy="400" rx="25" ry="25" fill="#c4bea6"/>
<ellipse cx="610" cy="362" rx="30" ry="16" fill="#8e9262"/>
<ellipse cx="690" cy="290" rx="22" ry="18" fill="#7c8a58"/>
<ellipse cx="780" cy="232" rx="40" ry="14" fill="#d4d8da"/>
</g>
</g>
<polygon points="622.0,347.5 607.0,359.0 597.0,368.0 591.0,378.0 584.0,385.0 572.0,393.0 562.0,404.0 552.0,417.0 545.0,430.0 542.0,446.0 537.5,461.0 535.0,475.0 533.0,490.0 537.0,500.0 543.0,513.0 547.0,527.0 557.0,540.0 567.0,553.0 590.0,553.0 607.0,558.0 620.0,555.0 633.0,560.0 647.0,572.0 658.0,572.0 663.0,590.0 660.0,607.0 667.0,627.0 680.0,640.0 687.0,657.0 693.0,680.0 687.0,693.0 685.0,710.0 697.0,727.0 713.0,747.0 727.0,763.0 737.0,777.0 763.0,782.0 780.0,780.0 800.0,777.0 820.0,767.0 837.0,753.0 837.0,737.0 847.0,727.0 873.0,713.0 880.0,687.0 873.0,667.0 877.0,647.0 890.0,630.0 913.0,603.0 937.0,573.0 950.0,553.0 957.0,525.0 930.0,530.0 913.0,537.0 907.0,530.0 903.0,520.0 925.0,512.0 941.6,508.0 947.5,501.0 962.0,491.0 976.6,483.7 985.4,472.0 991.2,457.5 992.7,445.8 985.4,437.0 975.2,422.5 973.7,416.6 982.4,423.9 1000.0,425.4 1008.0,423.0 1017.0,421.0 1027.0,430.0 1032.0,440.0 1041.0,445.0 1044.0,440.0 1046.0,450.0 1051.0,464.0 1056.0,481.0 1060.0,497.0 1065.0,512.0 1068.0,521.0 1073.0,517.0 1075.0,498.0 1077.0,469.0 1077.0,435.0 1075.0,426.0 1080.0,419.0 1089.0,411.0 1110.0,380.0 1110.0,150.0 910.0,150.0 905.0,228.0 890.0,222.0 865.0,215.0 840.0,217.0 815.0,214.0 790.0,214.0 770.0,215.0 760.0,221.0 744.0,226.0 735.0,232.5 727.5,241.0 730.0,246.0 739.0,247.5 750.0,250.0 740.0,252.5 735.0,256.0 731.0,255.0 725.0,260.0 712.5,262.5 706.0,267.5 697.5,270.0 692.5,272.5 677.5,276.0 670.0,280.0 662.5,282.0 670.0,290.0 669.0,300.0 662.5,305.0 635.0,304.0 630.0,307.5 627.5,312.5 620.0,317.0 616.0,329.0 612.0,341.0 622.0,347.5" fill="none" stroke="#f0f030" stroke-width="1"/>
<polygon points="622.0,347.0 630.5,345.0 640.7,341.0 652.9,335.0 656.9,327.0 667.0,317.0 677.0,310.0 685.0,308.5 697.6,306.4 709.8,305.4 713.0,305.0 721.0,317.5 731.0,327.5 740.0,336.0 739.0,344.0 741.0,340.0 742.5,332.5 746.0,330.0 749.0,327.5 740.0,320.0 731.0,310.0 724.0,300.0 725.0,299.0 734.0,305.0 744.0,315.0 755.0,325.0 757.5,335.0 760.0,340.0 765.0,346.0 770.0,349.0 777.5,340.0 785.0,332.5 790.0,327.5 796.0,334.0 800.0,340.0 798.7,348.1 811.9,353.9 827.9,355.4 845.4,353.9 846.9,361.2 843.9,375.8 839.6,387.5 826.4,388.9 809.0,387.5 790.0,386.0 783.0,383.7 762.6,377.6 750.4,377.6 742.3,389.8 722.0,377.6 701.6,367.4 697.6,355.2 699.6,345.0 681.3,345.0 661.0,345.0 640.7,349.0 624.4,349.0" fill="url(#ocn)" stroke="#f0f030" stroke-width="1"/>
<polygon points="804.6,308.7 809.0,302.9 826.4,301.5 848.3,307.3 868.7,316.0 871.6,324.8 851.2,326.2 833.7,321.9 816.2,323.3 803.1,319.0" fill="url(#ocn)" stroke="#f0f030" stroke-width="1"/>
<polygon points="754.0,252.0 765.0,258.0 780.0,253.0 788.0,245.0 803.0,238.0 790.0,236.0 782.0,234.0 790.0,220.0 782.0,224.0 772.0,240.0 762.0,249.0" fill="url(#ocn)" stroke="#f0f030" stroke-width="1"/>
<polygon points="841.0,412.2 851.2,419.5 862.9,437.0 873.0,452.0 890.0,477.0 903.0,503.0 906.0,517.0 901.0,521.0 887.0,503.0 870.0,477.0 855.6,438.5 845.4,423.9 839.6,415.2" fill="url(#ocn)" stroke="#f0f030" stroke-width="1"/>
<polygon points="928.5,396.2 938.7,402.1 950.4,410.8 965.0,418.1 973.7,416.6 970.8,419.6 967.9,428.3 959.1,432.7 950.4,434.1 941.6,425.4 932.9,413.7 924.1,397.7" fill="url(#ocn)" stroke="#f0f030" stroke-width="1"/>
<polygon points="715.0,341.0 728.5,340.0 727.0,346.0 720.0,349.0" fill="#8a9060" stroke="#f0f030" stroke-width="1"/>
<polygon points="696.0,331.0 697.0,318.0 702.0,312.5 706.0,314.0 705.0,332.0" fill="#7a8a58" stroke="#f0f030" stroke-width="1"/>
<polygon points="775.0,359.0 791.0,360.0 790.0,362.0 776.0,362.0" fill="#a8a880" stroke="#f0f030" stroke-width="1"/>
<polygon points="828.0,362.0 834.0,359.8 839.6,360.5 836.0,365.6 829.0,365.0" fill="#a8a880" stroke="#f0f030" stroke-width="1"/>
<polygon points="687.5,242.5 700.0,241.3 697.5,250.0 695.0,258.8 697.5,265.0 692.5,270.0 675.0,272.5 667.5,273.8 677.5,267.5 672.5,265.0 680.0,258.8 685.0,250.0" fill="#7a8a5a" stroke="#f0f030" stroke-width="1"/>
<polygon points="657.5,267.5 667.5,256.3 675.0,253.8 677.5,262.5 670.0,267.5" fill="#6a8050" stroke="#f0f030" stroke-width="1"/>
<polygon points="933.0,683.0 935.0,700.0 913.0,730.0 897.0,748.0 883.0,747.0 887.0,727.0 903.0,703.0 927.0,688.0" fill="#6a7c48" stroke="#f0f030" stroke-width="1"/>
<polygon points="1074.0,510.0 1078.0,512.0 1078.0,531.0 1074.0,527.0" fill="#6a7c48" stroke="#f0f030" stroke-width="1"/>
<polygon points="682.0,224.0 690.0,220.0 704.0,219.0 705.0,224.0 695.0,227.5 684.0,227.0" fill="#c8ccc8" stroke="#f0f030" stroke-width="1"/>
<polygon points="558.0,386.0 562.0,384.0 563.0,388.0 559.0,389.0" fill="#c8c0a0" stroke="#f0f030" stroke-width="1"/>
<polygon points="566.0,390.0 570.0,388.0 571.0,391.0 567.0,392.0" fill="#c8c0a0" stroke="#f0f030" stroke-width="1"/>
<polygon points="571.0,359.0 574.0,359.0 574.0,361.0 571.0,361.0" fill="#8a9a60" stroke="#f0f030" stroke-width="1"/>
<polygon points="512.0,452.0 515.0,450.0 516.0,453.0 513.0,455.0" fill="#c8c0a0" stroke="#f0f030" stroke-width="1"/>
<polygon points="514.0,460.0 518.0,459.0 518.0,463.0 515.0,464.0" fill="#c8c0a0" stroke="#f0f030" stroke-width="1"/>
<polyline points="731,297.5 755,295 777.5,292.5" fill="none" stroke="#eeee30" stroke-width="1"/>
<polyline points="746,287.5 777.5,282.5" fill="none" stroke="#eeee30" stroke-width="1"/>
<polyline points="777.5,252.5 780,281" fill="none" stroke="#eeee30" stroke-width="1"/>
<polyline points="785,256 815,265 821,281" fill="none" stroke="#eeee30" stroke-width="1"/>
<polyline points="780,281 802.5,285 821,281" fill="none" stroke="#eeee30" stroke-width="1"/>
<polyline points="755,295 765,302.5 777.5,307.5 796,306" fill="none" stroke="#eeee30" stroke-width="1"/>
<polyline points="796,292.5 802.5,302.5 800,310" fill="none" stroke="#eeee30" stroke-width="1"/>
<polyline points="745,305 760,315 770,322.5 787.5,325" fill="none" stroke="#eeee30" stroke-width="1"/>
<polyline points="770,322.5 771,332.5 785,332.5" fill="none" stroke="#eeee30" stroke-width="1"/>
<polyline points="721,294 712.5,305" fill="none" stroke="#eeee30" stroke-width="1"/>
<polyline points="712.5,281 725,290 746,287.5" fill="none" stroke="#eeee30" stroke-width="1"/>
<polyline points="702.5,265 715,277.5 712.5,281" fill="none" stroke="#eeee30" stroke-width="1"/>
<polyline points="734,271 777.5,269" fill="none" stroke="#eeee30" stroke-width="1"/>
<polyline points="796,306 800,316" fill="none" stroke="#eeee30" stroke-width="1"/>
<polyline points="850,290 870,300 880,318" fill="none" stroke="#eeee30" stroke-width="1"/>
<polyline points="640,504.4 660.3,510.5 692.9,510.5 709.1,492.2 711.2,480" fill="none" stroke="#eeee30" stroke-width="1"/>
<polyline points="692.9,510.5 703,520.7 705.1,539 696.9,541 688.8,547.1 674.6,559.3 666.4,557.3 656.3,571.5" fill="none" stroke="#eeee30" stroke-width="1"/>
<polyline points="770.1,480 768.1,500.3 757.9,510.5 753.8,522.7 759.9,534.9 766,547.1" fill="none" stroke="#eeee30" stroke-width="1"/>
<polyline points="705.1,539 705.1,557.3 731.5,549.1 759.9,534.9" fill="none" stroke="#eeee30" stroke-width="1"/>
<polyline points="766,547.1 782.3,541 798.6,547.1 818.9,545 831.1,530.8 835.2,530.8 839.2,543" fill="none" stroke="#eeee30" stroke-width="1"/>
<polyline points="699,567.4 707.1,593.8 729.4,579.6 757.9,583.7 790.4,577.6 810.8,585.7 823,591.8" fill="none" stroke="#eeee30" stroke-width="1"/>
<polyline points="662.4,589.8 707.1,597.9 725.4,587.7 721.3,610.1 709.1,626.4 709.1,640 696.7,640 680,626.7 660,606.7" fill="none" stroke="#eeee30" stroke-width="1"/>
<polyline points="662.4,589.8 676.6,597.9 690.8,602 694.9,618.2 680.7,626.4" fill="none" stroke="#eeee30" stroke-width="1"/>
<polyline points="859.6,528.8 859.6,508.5 869.7,492.2" fill="none" stroke="#eeee30" stroke-width="1"/>
<polyline points="847.4,579.6 855.5,583.7 873.8,589.8 896.1,585.7 888,610.1 892.1,622.3 879.9,640" fill="none" stroke="#eeee30" stroke-width="1"/>
<polyline points="843.3,589.8 847.4,606 841.3,618.2 863.6,634.5 890,626.7" fill="none" stroke="#eeee30" stroke-width="1"/>
<polyline points="588.3,395 600,416.6 625,451.6 635,463.3 638.3,488.2" fill="none" stroke="#eeee30" stroke-width="1"/>
<polyline points="591.7,415 583.3,478.2" fill="none" stroke="#eeee30" stroke-width="1"/>
<polyline points="635,463.3 693.2,436.6 713.2,441.6 769.8,469.9 769.8,499.9" fill="none" stroke="#eeee30" stroke-width="1"/>
<polyline points="693.2,436.6 679.9,416.6 686.6,390 681.6,370 686.7,346.7" fill="none" stroke="#eeee30" stroke-width="1"/>
<polyline points="711.6,443.3 713.2,463.3 709.9,489.9 694.9,506.6" fill="none" stroke="#eeee30" stroke-width="1"/>
<polyline points="606.6,489.9 630,486.6 635,463.3" fill="none" stroke="#eeee30" stroke-width="1"/>
<polyline points="580,503.2 606.6,489.9 630,506.6 650,509.9 673.3,511.6 694.9,508.2 711,492" fill="none" stroke="#eeee30" stroke-width="1"/>
<polyline points="780,386 780,453.3" fill="none" stroke="#eeee30" stroke-width="1"/>
<polyline points="769.8,453.3 845,453.3" fill="none" stroke="#eeee30" stroke-width="1"/>
<polyline points="626.7,350 613,372 590,386.7 563.3,403.3 545,420" fill="none" stroke="#eeee30" stroke-width="1"/>
<polyline points="543.3,430 583.3,430 586.7,416.7" fill="none" stroke="#eeee30" stroke-width="1"/>
<polyline points="683.3,646.7 713.3,650 720,663.3 746.7,660 753.3,680 763.3,686.7 800.3,686.7" fill="none" stroke="#eeee30" stroke-width="1"/>
<polyline points="686.7,710 746.7,720 773.3,723.3 800.3,723.3" fill="none" stroke="#eeee30" stroke-width="1"/>
<polyline points="753.3,680 753.3,706.7 773.3,706.7" fill="none" stroke="#eeee30" stroke-width="1"/>
<polyline points="746.7,720 743.3,760 736.7,776.7" fill="none" stroke="#eeee30" stroke-width="1"/>
<polyline points="773.3,723.3 773.3,756.7 800.3,753.3" fill="none" stroke="#eeee30" stroke-width="1"/>
<polyline points="643.3,570 660,550 680,540" fill="none" stroke="#eeee30" stroke-width="1"/>
<polyline points="546.7,513.3 563.3,516.7 586.7,516.7 590,550" fill="none" stroke="#eeee30" stroke-width="1"/>
<polyline points="606.7,520 613.3,553.3" fill="none" stroke="#eeee30" stroke-width="1"/>
<polyline points="620,516.7 626.7,553.3" fill="none" stroke="#eeee30" stroke-width="1"/>
<polyline points="836.7,686.7 880,683.3" fill="none" stroke="#eeee30" stroke-width="1"/>
<polyline points="800,703.3 820,713.3 833.3,720 840,700" fill="none" stroke="#eeee30" stroke-width="1"/>
<polyline points="780,733.3 813.3,746.7 833.3,733.3" fill="none" stroke="#eeee30" stroke-width="1"/>
<polyline points="850,583.3 890,626.7" fill="none" stroke="#eeee30" stroke-width="1"/>
<polyline points="806.7,633.3 810,666.7 796.7,686.7" fill="none" stroke="#eeee30" stroke-width="1"/>
<polyline points="823.3,593.3 846.7,600" fill="none" stroke="#eeee30" stroke-width="1"/>
<polyline points="903.3,530 913.3,563.3 936.7,556.7" fill="none" stroke="#eeee30" stroke-width="1"/>
<polyline points="856.7,383.3 890,363.3 926.7,396.7" fill="none" stroke="#eeee30" stroke-width="1"/>
<polyline points="913.3,476.7 960,480 980,446.7" fill="none" stroke="#eeee30" stroke-width="1"/>
<polyline points="966.7,443.3 986.7,423.3" fill="none" stroke="#eeee30" stroke-width="1"/>
<polyline points="890,356.7 926.7,340 980,350 983.3,396.7 996.7,416.7" fill="none" stroke="#eeee30" stroke-width="1"/>
<polyline points="846.7,350 890,343.3" fill="none" stroke="#eeee30" stroke-width="1"/>
<polyline points="870,320 890,323.3 905,330" fill="none" stroke="#eeee30" stroke-width="1"/>
<polyline points="880,280 926.7,263.3 980,280 1000,283.3 993.3,323.3" fill="none" stroke="#eeee30" stroke-width="1"/>
<polyline points="880,280 890,300 905,320" fill="none" stroke="#eeee30" stroke-width="1"/>
<polyline points="980,350 1013.3,346.7 1020,370 1013.3,390 1000,403.3 1020,423.3" fill="none" stroke="#eeee30" stroke-width="1"/>
<polyline points="1020,370 1033.3,390 1036.7,436.7" fill="none" stroke="#eeee30" stroke-width="1"/>
<polyline points="1033.3,350 1073.3,390" fill="none" stroke="#eeee30" stroke-width="1"/>
<polyline points="630.5,304.4 628.5,320.7 616.3,341" fill="none" stroke="#eeee30" stroke-width="1"/>
<polyline points="661,306.4 677.3,310.5" fill="none" stroke="#eeee30" stroke-width="1"/>
<polyline points="701.6,280 713.8,288.1 701.6,298.3" fill="none" stroke="#eeee30" stroke-width="1"/>
<polyline points="722,296.3 742.3,290.2" fill="none" stroke="#eeee30" stroke-width="1"/>
<polyline points="780,257.5 785,282.5" fill="none" stroke="#eeee30" stroke-width="1"/>
<polyline points="815,290 852.5,285" fill="none" stroke="#eeee30" stroke-width="1"/>
<polyline points="802.5,237.5 815,260" fill="none" stroke="#eeee30" stroke-width="1"/>
<polyline points="815,217.5 805,237.5" fill="none" stroke="#eeee30" stroke-width="1"/>
<polyline points="760,215 745,240" fill="none" stroke="#eeee30" stroke-width="1"/>
<polyline points="790,260 815,260" fill="none" stroke="#eeee30" stroke-width="1"/>
<polyline points="760,270 780,277.5" fill="none" stroke="#eeee30" stroke-width="1"/>
<polyline points="885,282.5 920,265 959.8,265" fill="none" stroke="#eeee30" stroke-width="1"/>
<polyline points="742,300 760,300 770,315 790,320 800,305 800,290" fill="none" stroke="#eeee30" stroke-width="1"/>
<polyline points="750,310 775,330 790,340" fill="none" stroke="#eeee30" stroke-width="1"/>
<circle cx="788.75" cy="503.75" r="304.5" fill="url(#haze)"/>
<circle cx="788.75" cy="503.75" r="304.5" fill="url(#lhaze)" clip-path="url(#lclip)"/>
<polyline points="744.0,263.0 752.5,272.5 760.0,282.5 771.0,292.5 785.0,300.0 793.0,307.3 798.7,317.5 809.0,324.8" fill="none" stroke="#000" stroke-width="10" stroke-linejoin="round"/>
<polyline points="798.7,317.5 809.0,324.8 819.2,332.1 827.9,342.3 832.3,351.0 839.6,349.6 849.8,352.5 852.7,361.2 851.2,372.9 848.3,383.1 842.5,391.8 830.8,396.2 826.4,402.0 827.9,413.7 833.7,425.4 839.6,437.0 847.0,452.0 849.0,485.0 848.0,527.0 846.0,560.0 838.0,580.0 823.0,600.0 817.5,627.0 815.0,642.0 812.0,655.0 809.0,672.0 813.0,685.0 810.0,700.0 805.0,727.0" fill="none" stroke="#000" stroke-width="8" stroke-linejoin="round"/>
</g>
<circle cx="788.75" cy="503.75" r="303.8" fill="none" stroke="#d8f4ff" stroke-width="2.2"/>
<path d="M534.2 338.5 A303.5 303.5 0 0 1 746.5 203.2" stroke="#e6f070" stroke-width="1.5" fill="none" opacity=".55"/><path d="M1073.9 399.9 A303.5 303.5 0 0 1 1089.3 546.0" stroke="#e6f070" stroke-width="1.5" fill="none" opacity=".7"/>
</svg>
<!-- NASA logo -->
<svg class="a" style="left:305px;top:48px" width="34" height="33" viewBox="0 0 34 33"><circle cx="16.5" cy="16.5" r="15" fill="#1b5fb8"/><path d="M2 25 C10 20 22 12 33 2" stroke="#e0303a" stroke-width="2" fill="none"/><ellipse cx="16.5" cy="17" rx="13" ry="5" fill="none" stroke="#fff" stroke-width=".7" transform="rotate(-20 16.5 17)"/><text x="16.5" y="20" font-family="Liberation Sans" font-weight="bold" font-size="8.5" fill="#fff" text-anchor="middle" font-style="italic">NASA</text></svg>
<div class="a" style="left:345px;top:49px;font-size:12.6px;line-height:14px;color:#fff;font-weight:bold;letter-spacing:.45px">NASA <span style="font-weight:normal">Earth Observations</span></div>
<div class="a" style="left:345px;top:64px;font-size:12.6px;line-height:14px;color:#fff;letter-spacing:.45px">neo.sci.gsfc.nasa.gov</div>
<!-- legend -->
<div class="a" style="left:514px;top:46px;width:200px;height:35px;background:#fff"></div>
<div class="a" style="left:524px;top:58px;width:180px;height:10px;border:1px solid #000;background:linear-gradient(rgba(255,255,255,.12),rgba(255,255,255,.12) 55%,rgba(0,0,0,.06) 56%),linear-gradient(90deg,#e8e4da 0,#e8e4da 7%,#cbc3a8 7%,#b8b48c 45.5%,#8c9252 46%,#4f5c3a 88%,#1c2a12 88.5%,#1c2a12 100%)"></div>
<div class="a" style="left:524px;top:67px;width:1px;height:3px;background:#000"></div>
<div class="a" style="left:614px;top:67px;width:1px;height:3px;background:#000"></div>
<div class="a" style="left:703px;top:67px;width:1px;height:3px;background:#000"></div>
<div class="a" style="left:514px;top:71px;font-size:10px;line-height:11px;color:#000">-0.1</div>
<div class="a" style="left:606px;top:71px;font-size:10px;line-height:11px;color:#000">0.4</div>
<div class="a" style="left:697px;top:71px;font-size:10px;line-height:11px;color:#000">0.9</div>
<!-- credits -->
<div class="a" style="left:589px;top:873px;width:400px;text-align:center;font-size:12.8px;line-height:15px;color:#f0f0f0">US Dept of State Geographer<br>© 2012 Google<br>Data SIO, NOAA, U.S. Navy, NGA, GEBCO<br>© 2012 MapLink/Tele Atlas</div>
<div class="a" style="left:655px;top:942px;font-size:12.8px;line-height:15px;color:#f0f0f0;white-space:pre">11°13'54.67" N  50°38'18.05" O Höhe   492 m</div>
<div class="a" style="left:1112px;top:942px;font-size:13px;line-height:15px;color:#f0f0f0">Sichthöhe 12531.53 km</div>
<div class="a" style="left:1258px;top:941px;width:16px;height:16px;border-radius:50%;border:3px solid #7090c0"></div>
<div class="a" style="left:1113px;top:886px;font-family:'Liberation Serif',serif;font-size:34px;line-height:36px;color:#e4e4e4;letter-spacing:-1px">Google</div>
<div class="a" style="left:1213px;top:891px;font-size:25px;line-height:28px;color:#bcbcbc">earth</div>

<svg class="a" style="left:1190px;top:50px" width="92" height="300" viewBox="1190 50 92 300">
<defs>
<radialGradient id="ball" cx="40%" cy="30%" r="75%"><stop offset="0" stop-color="#ffffff"/><stop offset=".5" stop-color="#eeeeee"/><stop offset=".8" stop-color="#c8c8c8"/><stop offset="1" stop-color="#9a9a9a"/></radialGradient>
<linearGradient id="capg" x1="0" y1="0" x2="0" y2="1"><stop offset="0" stop-color="#fff"/><stop offset="1" stop-color="#d0d0d0"/></linearGradient>
</defs>
<circle cx="1236" cy="96" r="37.8" fill="#303030" stroke="#9a9a9a" stroke-width="3"/>
<circle cx="1236" cy="96" r="25" fill="url(#ball)"/>
<rect x="1230.5" y="54.5" width="12" height="10.5" rx="2.5" fill="#fff"/>
<text x="1236.5" y="63.6" font-family="Liberation Sans" font-weight="bold" font-size="10" text-anchor="middle" fill="#000">N</text>
<g fill="#bbb"><rect x="1203" y="94" width="1.5" height="1.5"/><rect x="1203" y="97" width="1.5" height="1.5"/><rect x="1267" y="94" width="1.5" height="1.5"/><rect x="1267" y="97" width="1.5" height="1.5"/><rect x="1232" y="128" width="1.5" height="1.5"/><rect x="1236" y="128" width="1.5" height="1.5"/></g>
<g stroke="#5a88c8" stroke-width="3" fill="none" stroke-linejoin="miter">
<path d="M1230.5 82 L1236 77 L1241.5 82"/><path d="M1230.5 109 L1236 114 L1241.5 109"/><path d="M1222 90.5 L1217 96 L1222 101.5"/><path d="M1250 90.5 L1255 96 L1250 101.5"/>
<path d="M1230.5 155 L1236 150 L1241.5 155"/><path d="M1230.5 181 L1236 186 L1241.5 181"/><path d="M1222 162.5 L1217 168 L1222 173.5"/><path d="M1250 162.5 L1255 168 L1250 173.5"/>
</g>
<circle cx="1236" cy="168" r="25" fill="url(#ball)" style="mix-blend-mode:normal"/>
<g stroke="#5a88c8" stroke-width="3" fill="none">
<path d="M1230.5 155 L1236 150 L1241.5 155"/><path d="M1230.5 181 L1236 186 L1241.5 181"/><path d="M1222 162.5 L1217 168 L1222 173.5"/><path d="M1250 162.5 L1255 168 L1250 173.5"/>
</g>
<ellipse cx="1236" cy="96" rx="7" ry="4.5" fill="#fff" stroke="#5a88c8" stroke-width="1.5"/><circle cx="1236" cy="96" r="2.5" fill="#2a4a90"/>
<path d="M1231 172 C1230 168 1231 163 1233 164 L1233 160 C1234 158 1235 159 1235.5 161 L1236 159 C1237 157 1238.5 158 1238.5 160 L1239 162 C1240 160 1241.5 161 1241 164 L1240.5 170 C1239 174 1233 175 1231 172 Z" fill="#fff" stroke="#5a88c8" stroke-width="1"/>
<rect x="1233" y="220" width="6.5" height="105" fill="#7a7a7a" stroke="#fff" stroke-width="1"/>
<path d="M1227 221 V210 Q1227 201 1236 201 Q1245 201 1245 210 V221 Z" fill="url(#capg)"/>
<path d="M1232 211 H1240 M1236 207 V215" stroke="#5a88c8" stroke-width="2.2"/>
<path d="M1227 324 V336 Q1227 345 1236 345 Q1245 345 1245 336 V324 Z" fill="url(#capg)"/>
<path d="M1232 334 H1240" stroke="#5a88c8" stroke-width="2.2"/>
<rect x="1228" y="268" width="16" height="10" rx="4" fill="url(#capg)" stroke="#ccc" stroke-width=".5"/>
<path d="M1232 273 H1240" stroke="#5a88c8" stroke-width="2"/>
</svg></div><!--/map-->
</body></html>
